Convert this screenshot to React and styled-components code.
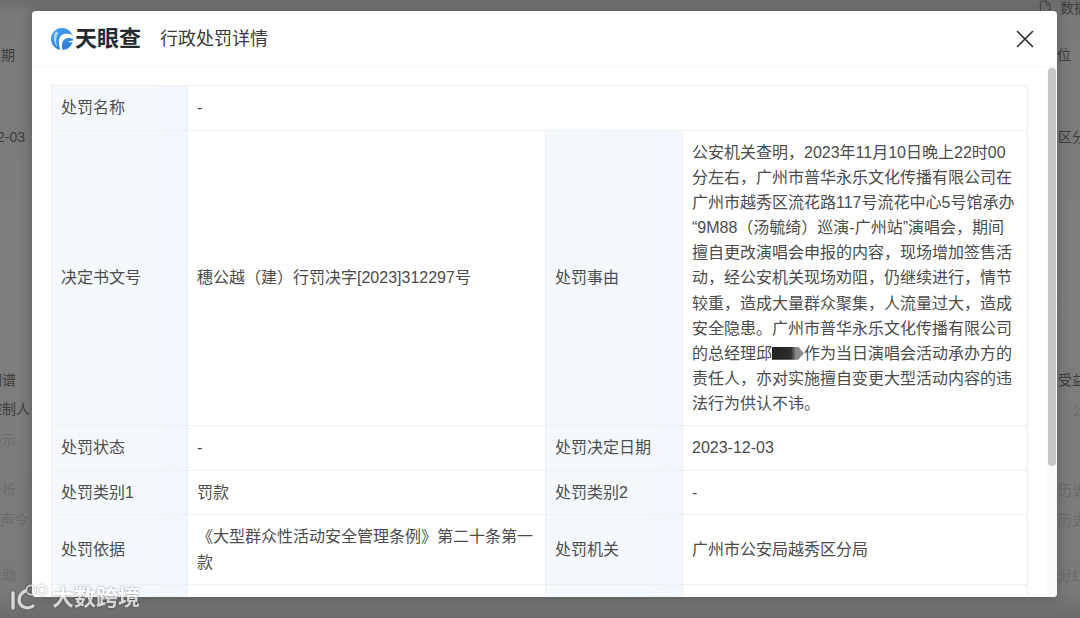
import React from "react";
import styled, { createGlobalStyle } from "styled-components";
import { File, X } from "lucide-react";

const font_stack = `"Liberation Sans", "Noto Sans CJK SC", sans-serif`;

const leftItems = [
  { text: "日期", top: 45, right: 17 },
  { text: "2-03", top: 62, right: 7 },
  { text: "图谱", top: 223, right: 16 },
  { text: "控制人", top: 9, right: 2 },
  { text: "提示", top: 11, right: 16, faint: true },
  { text: "分析", top: 30, right: 16, faint: true },
  { text: "声令", top: 10, right: 4, faint: true },
  { text: "帮助", top: 35, right: 16, faint: true }
];

const rightItems = [
  { text: "单位", top: 31, left: -15 },
  { text: "区分", top: 62, left: 0 },
  { text: "受益", top: 223, left: 0 },
  { text: "公", top: 10, left: 14, faint: true },
  { text: "历史", top: 60, left: 0, faint: true },
  { text: "历史", top: 10, left: 0, faint: true },
  { text: "分红", top: 35, left: 0, faint: true }
];

const decisionNo = "穗公越\uFF08建\uFF09行罚决字[2023]312297号";
// \u200B before the opening quote: the quote would otherwise glue to the previous char
const reasonStart =
  "公安机关查明\uFF0C2023年11月10日晚上22时00分左右\uFF0C广州市普华永乐文化传播有限公司在广州市越秀区流花路117号流花中心5号馆承办\u200B\u201C9M88\uFF08汤毓绮\uFF09巡演-广州站\u201D演唱会\uFF0C期间擅自更改演唱会申报的内容\uFF0C现场增加签售活动\uFF0C经公安机关现场劝阻\uFF0C仍继续进行\uFF0C情节较重\uFF0C造成大量群众聚集\uFF0C人流量过大\uFF0C造成安全隐患\u3002广州市普华永乐文化传播有限公司的总经理邱";
const reasonEnd =
  "作为当日演唱会活动承办方的责任人\uFF0C亦对实施擅自变更大型活动内容的违法行为供认不讳\u3002";

const App = () => (
  <>
    <GlobalStyle />
    <Page>
      <SideColumn>
        {leftItems.map(({ text, top, right, faint }, i) => (
          <SideText key={i} $top={top} $right={right} $faint={faint}>
            {text}
          </SideText>
        ))}
      </SideColumn>
      <SideColumn $right>
        <DataLink>
          <File size={14} strokeWidth={1.5} />
          <span>数据</span>
        </DataLink>
        {rightItems.map(({ text, top, left, faint }, i) => (
          <SideText key={i} $top={top} $left={left} $faint={faint} $start>
            {text}
          </SideText>
        ))}
      </SideColumn>

      <Modal>
        <Header>
          <Brand>
            <TycLogo />
            <BrandName>天眼查</BrandName>
          </Brand>
          <Title>行政处罚详情</Title>
          <CloseBtn>
            <X size={30} strokeWidth={1.3} />
          </CloseBtn>
        </Header>
        <Body>
          <Table>
            <colgroup>
              <col width="136" />
              <col width="358" />
              <col width="137" />
              <col width="345" />
            </colgroup>
            <tbody>
              <Row $h={45}>
                <Label>处罚名称</Label>
                <Value colSpan={3}>-</Value>
              </Row>
              <Row $h={295}>
                <Label>决定书文号</Label>
                <Value>{decisionNo}</Value>
                <Label>处罚事由</Label>
                <Value>
                  {reasonStart}
                  <Redacted />
                  {reasonEnd}
                </Value>
              </Row>
              <Row $h={45}>
                <Label>处罚状态</Label>
                <Value>-</Value>
                <Label>处罚决定日期</Label>
                <Value>2023-12-03</Value>
              </Row>
              <Row $h={44}>
                <Label>处罚类别1</Label>
                <Value>罚款</Value>
                <Label>处罚类别2</Label>
                <Value>-</Value>
              </Row>
              <Row $h={70}>
                <Label>处罚依据</Label>
                <Value>《大型群众性活动安全管理条例》第二十条第一款</Value>
                <Label>处罚机关</Label>
                <Value>广州市公安局越秀区分局</Value>
              </Row>
              <Row $h={90}>
                <Label />
                <Value />
                <Label />
                <Value />
              </Row>
            </tbody>
          </Table>
        </Body>
        <ScrollTrack>
          <ScrollThumb />
        </ScrollTrack>
      </Modal>

      <Watermark>
        <WatermarkLogo />
        <WatermarkText>大数跨境</WatermarkText>
      </Watermark>
    </Page>
  </>
);

export default App;

const TycLogo = () => (
  <svg width="22" height="22" viewBox="0 0 23 23">
    <defs>
      <linearGradient id="tyc" x1="0" y1="0" x2="0.6" y2="1">
        <stop offset="0" stopColor="#45a0f0" />
        <stop offset="1" stopColor="#2a7fdc" />
      </linearGradient>
    </defs>
    <circle cx="11.5" cy="11.5" r="11.5" fill="url(#tyc)" />
    <path
      d="M23 8.2C18.6 4.6 13 5.2 10 8.6 7.6 11.6 7.6 17 10 23 10.8 23 11.4 23 12.2 23 10.8 18.6 11 14.6 13.6 12.2 16 10.2 19.6 10 23 11.4Z"
      fill="#fff"
    />
    <path d="M5 3.4C1.8 8 2.2 14.6 6.6 20 5 14.6 5 9.4 8 5.2Z" fill="#a9d4f7" />
    <path d="M23 13.4C21.4 13 19.4 13.2 18 14 19 15 21 15.4 23 15Z" fill="#fff" />
  </svg>
);

const WatermarkLogo = () => (
  <svg width="40" height="30" viewBox="0 0 40 30" fill="none" stroke="#fff">
    <path d="M3 10v15" strokeWidth="3.4" strokeLinecap="round" />
    <path
      d="M15 8C8.5 11.5 8 18 10.5 21.5c2.5 3.5 8 4.6 12.5 1.5"
      strokeWidth="3.2"
      strokeLinecap="round"
    />
    <circle cx="21" cy="7" r="4.6" strokeWidth="1.6" />
    <circle cx="32" cy="7" r="4.6" strokeWidth="1.6" />
  </svg>
);

const GlobalStyle = createGlobalStyle`
  html, body {
    margin: 0;
    padding: 0;
  }

  body {
    font-family: ${font_stack};
  }
`;

const Page = styled.div`
  position: relative;
  display: flex;
  justify-content: space-between;
  width: 1080px;
  height: 618px;
  overflow: hidden;
  background: linear-gradient(
    to bottom,
    #6d6d6d 0,
    #7a7a7a 14px,
    #7e7e7e 300px,
    #7a7a7a 590px,
    #6c6c6c 618px
  );
`;

const SideColumn = styled.div`
  display: flex;
  flex-direction: column;
  width: ${props => (props.$right ? "22px" : "32px")};
  overflow: ${props => (props.$right ? "visible" : "hidden")};
`;

const SideText = styled.div`
  flex-shrink: 0;
  height: 20px;
  line-height: 20px;
  font-size: 14px;
  white-space: nowrap;
  margin-top: ${props => props.$top}px;
  margin-left: ${props => props.$left || 0}px;
  display: flex;
  justify-content: ${props => (props.$start ? "flex-start" : "flex-end")};
  padding-right: ${props => props.$right || 0}px;
  color: ${props => (props.$faint ? "#6b6b6b" : "#3c3c3c")};
`;

const DataLink = styled.div`
  display: flex;
  align-items: center;
  gap: 8px;
  height: 14px;
  margin-left: -20px;
  font-size: 14px;
  white-space: nowrap;
  color: #3c3c3c;

  svg {
    flex-shrink: 0;
  }
`;

const Modal = styled.div`
  position: absolute;
  top: 11px;
  left: 32px;
  display: flex;
  flex-direction: column;
  width: 1025px;
  height: 586px;
  overflow: hidden;
  background: #fff;
  border-radius: 4px;
  box-shadow: 0 0 14px rgba(0, 0, 0, 0.28);
`;

const Header = styled.div`
  flex-shrink: 0;
  display: flex;
  align-items: center;
  box-sizing: border-box;
  height: 56px;
  padding: 0 17px 0 19px;
  border-bottom: 1px solid #f6f6f6;
`;

const Brand = styled.div`
  display: flex;
  align-items: center;
  gap: 2px;
  margin-right: 19px;
`;

const BrandName = styled.span`
  font-size: 22px;
  line-height: 28px;
  font-weight: 700;
  color: #252a30;
`;

const Title = styled.div`
  font-size: 18px;
  line-height: 24px;
  color: #3a3a3a;
`;

const CloseBtn = styled.div`
  display: flex;
  margin-left: auto;
  color: #2e2e2e;
`;

const Body = styled.div`
  flex: 1;
  min-height: 0;
  overflow: hidden;
  padding: 18px 19px 0;
`;

const ScrollTrack = styled.div`
  position: absolute;
  top: 56px;
  right: 0;
  bottom: 0;
  width: 10px;
  background: #f9f9f9;
`;

const ScrollThumb = styled.div`
  width: 8px;
  height: 398px;
  margin: 1px 1px 0;
  border-radius: 4px;
  background: #c6c6c6;
`;

const Table = styled.table`
  width: 976px;
  table-layout: fixed;
  border-collapse: collapse;
  font-size: 16px;
  line-height: 25.1px;
`;

const Row = styled.tr`
  height: ${props => props.$h}px;
`;

const Label = styled.td`
  box-sizing: border-box;
  padding: 0 9px;
  border: 1px solid #eef0f2;
  background: linear-gradient(to right, #f5f9fd, #f2f7fd);
  color: #4d4d4d;
`;

const Value = styled.td`
  box-sizing: border-box;
  padding: 8px 9px;
  border: 1px solid #eef0f2;
  color: #4b4b4b;
`;

const Redacted = styled.span`
  display: inline-block;
  width: 32px;
  height: 13px;
  vertical-align: -1px;
  background: linear-gradient(to right, #222 0, #2e2e2e 60%, #8a8a8a 75%, #8f8f8f 100%);
  clip-path: polygon(0 0, 82% 0, 100% 50%, 82% 100%, 0 100%);
`;

const Watermark = styled.div`
  position: absolute;
  left: 10px;
  top: 583px;
  display: flex;
  align-items: center;
  gap: 2px;
  opacity: 0.72;
  filter: drop-shadow(0 0 1px rgba(0, 0, 0, 0.55));
`;

const WatermarkText = styled.span`
  font-size: 22px;
  line-height: 30px;
  font-weight: 700;
  color: #fff;
`;
